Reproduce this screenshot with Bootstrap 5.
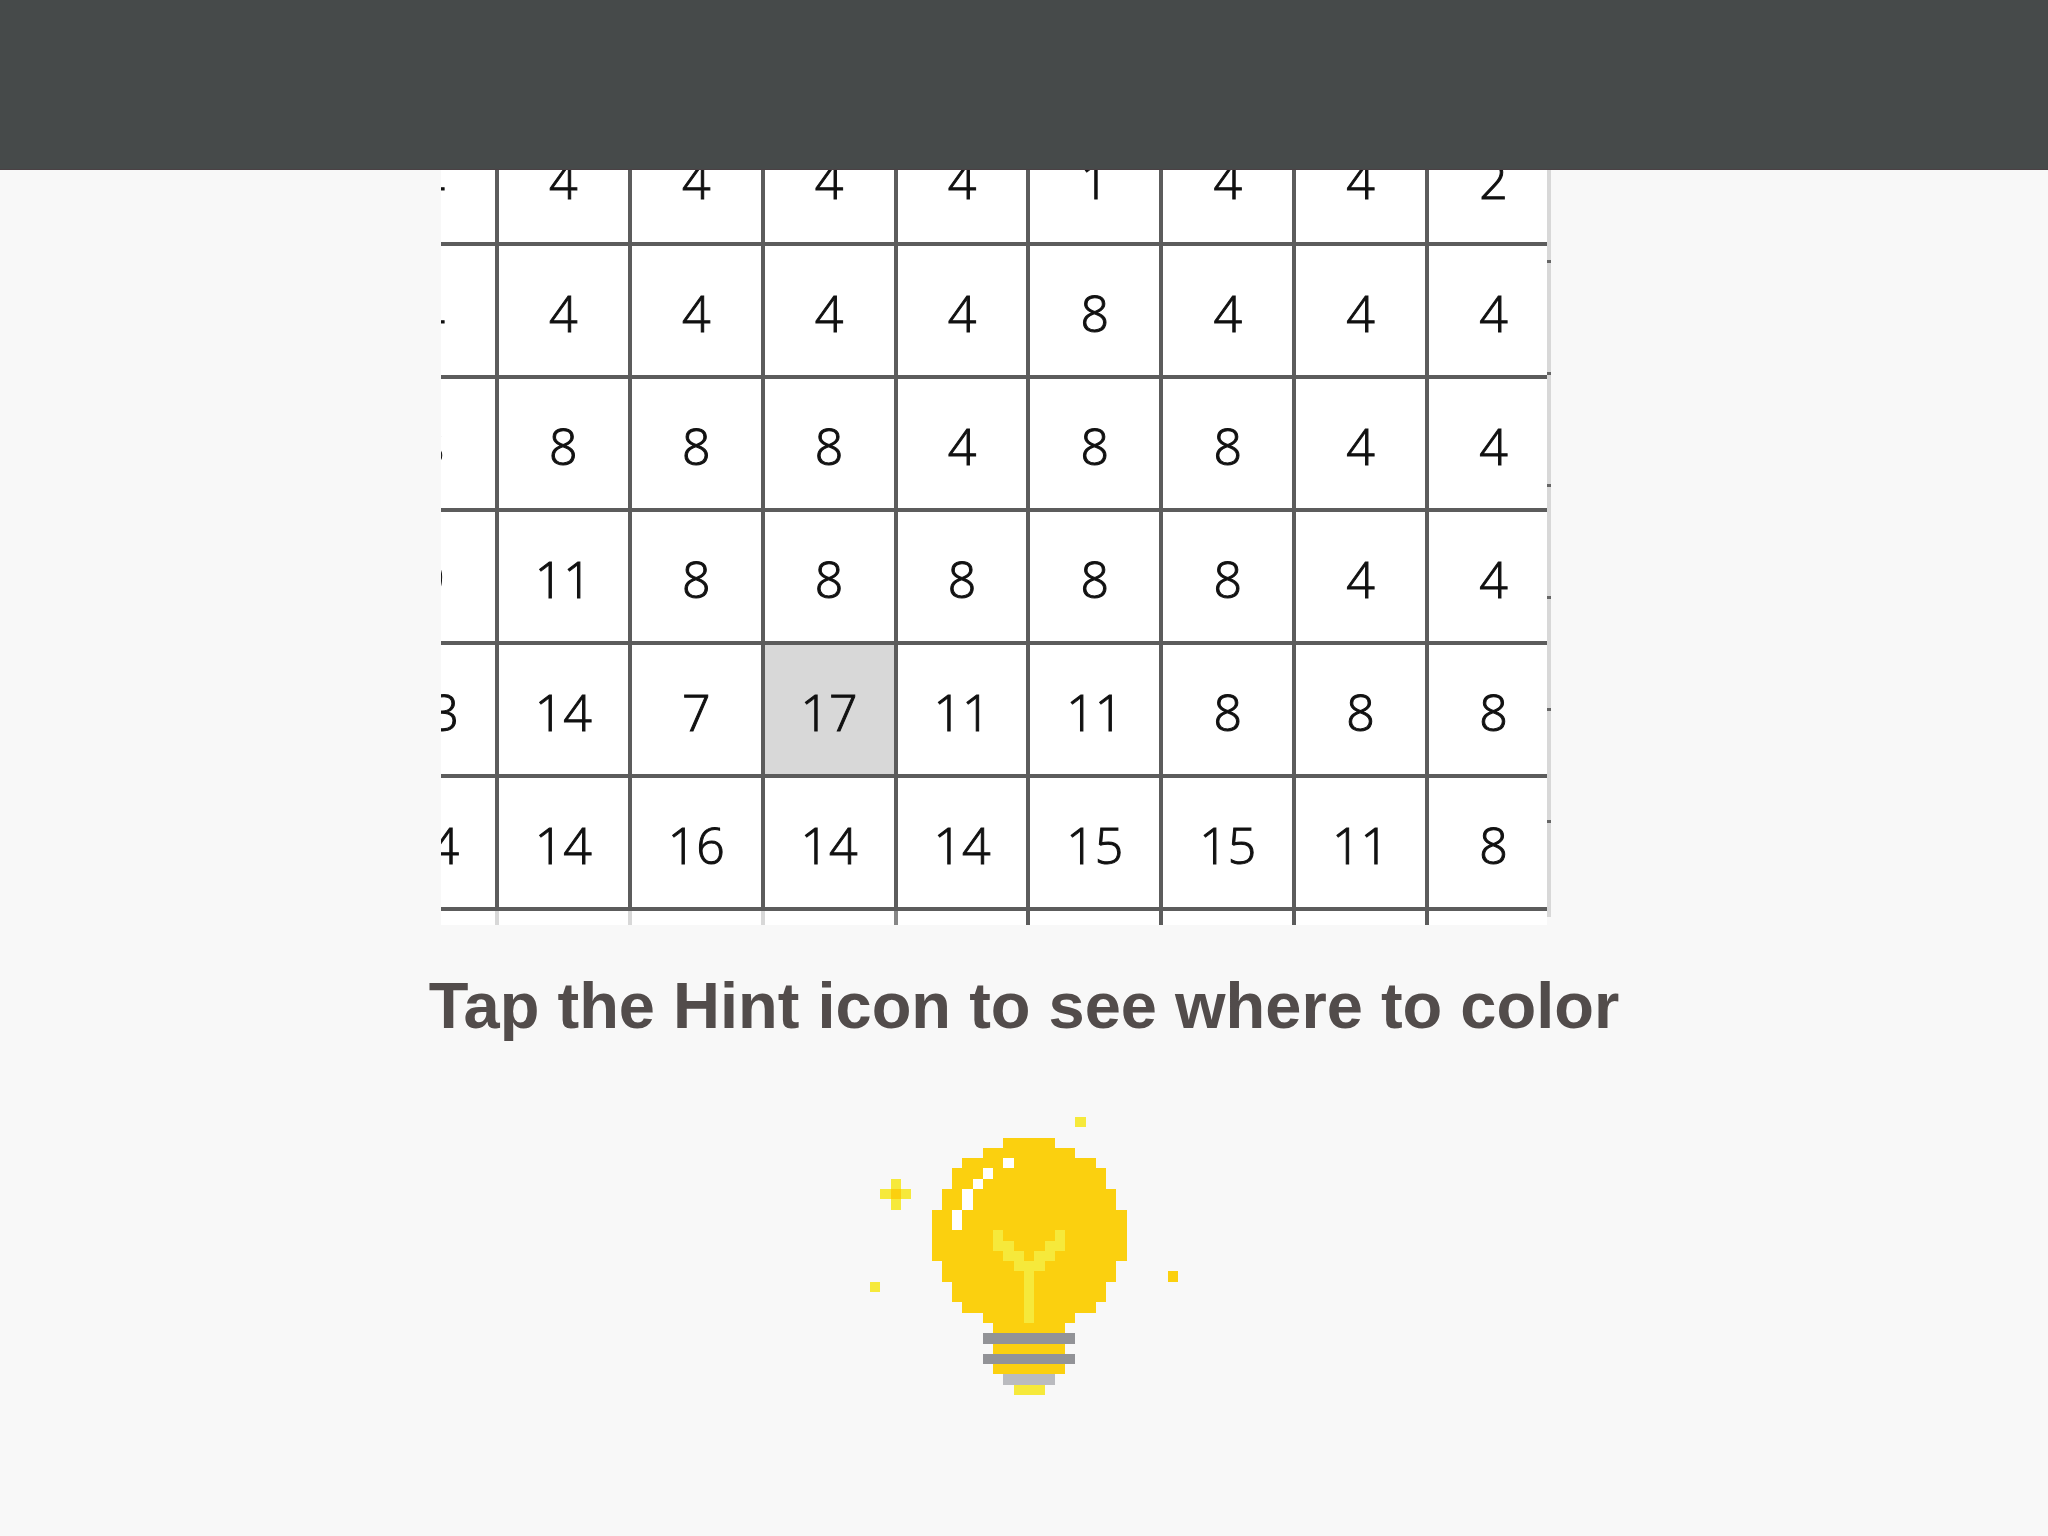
<!DOCTYPE html>
<html lang="en">
<head>
<meta charset="utf-8">
<meta name="viewport" content="width=device-width, initial-scale=1">
<title>Color by number: hint</title>
<link href="https://cdn.jsdelivr.net/npm/bootstrap@5.3.0/dist/css/bootstrap.min.css" rel="stylesheet">
<style>
body { background: #f8f8f8; font-family: "Liberation Sans", Arial, sans-serif; }
.top-bar { height: 170px; background: #464a4a; border-bottom: 1px solid #4a4144; }
.stage { max-width: 1166px; }
.board-view { width: 100%; max-width: 1106px; height: 755px; background: #fff; }
/* the board is larger than its viewport, so it is panned under it */
.board { width: 1200px; table-layout: fixed; border-collapse: collapse; margin: -61px 0 0 -79px; }
.board td { height: 133px; padding: 4px 0 0; border: 4px solid #5c5c5c; text-align: center; vertical-align: middle;
  font: 300 50px/60px "Open Sans", sans-serif; color: #111; -webkit-text-stroke: 1px #111; }
.board .picked { background: #d8d8d8; }
.board .dim { border-color: #868686 #d8d8d8 #d8d8d8; }
.board .dim-end { border-right-color: #868686; }
.board-edge { width: 4px; height: 747px;
  background: linear-gradient(#666 3px, #d8d8d8 3px) 0 -22px / 4px 112px; }
.hint-title { margin: 41px 0 0; font-size: 65px; line-height: 80px; font-weight: 700; color: #524c4b; }
.hint-button { margin-top: 71px; }
.hint-button svg { width: 308px; height: 278px; }
</style>
<script src="https://cdn.jsdelivr.net/npm/bootstrap@5.3.0/dist/js/bootstrap.bundle.min.js"></script>
</head>
<body>
<header class="top-bar"></header>
<main class="d-flex flex-column align-items-center">
  <div class="stage w-100 d-flex align-items-start">
    <div class="board-view overflow-hidden">
      <table class="board">
        <tbody>
          <tr><td>4</td><td>4</td><td>4</td><td>4</td><td>4</td><td>1</td><td>4</td><td>4</td><td>2</td></tr>
          <tr><td>4</td><td>4</td><td>4</td><td>4</td><td>4</td><td>8</td><td>4</td><td>4</td><td>4</td></tr>
          <tr><td>8</td><td>8</td><td>8</td><td>8</td><td>4</td><td>8</td><td>8</td><td>4</td><td>4</td></tr>
          <tr><td>9</td><td>11</td><td>8</td><td>8</td><td>8</td><td>8</td><td>8</td><td>4</td><td>4</td></tr>
          <tr><td>13</td><td>14</td><td>7</td><td class="picked">17</td><td>11</td><td>11</td><td>8</td><td>8</td><td>8</td></tr>
          <tr><td>14</td><td>14</td><td>16</td><td>14</td><td>14</td><td>15</td><td>15</td><td>11</td><td>8</td></tr>
          <tr><td class="dim"></td><td class="dim"></td><td class="dim"></td><td class="dim dim-end"></td><td></td><td></td><td></td><td></td><td></td></tr>
        </tbody>
      </table>
    </div>
    <div class="board-edge flex-shrink-0"></div>
  </div>
  <h1 class="hint-title text-center">Tap the Hint icon to see where to color</h1>
  <button type="button" class="hint-button btn p-0 border-0" aria-label="Hint">
    <svg class="d-block" viewBox="0 0 30 27" preserveAspectRatio="none" shape-rendering="crispEdges" aria-hidden="true">
      <path fill="#fbd00f" d="M13 2h5v1h2v1h2v1h1v2h1v2h1v5h-1v2h-1v2h-1v1h-2v1h-1v5h-7v-5h-1v-1h-2v-1h-1v-2h-1v-2h-1v-5h1v-2h1v-2h1v-1h2v-1h2z"/>
      <path fill="#fff" d="M13 4h1v1h-1zM11 5h1v1h-1zM10 6h1v1h-1zM9 7h1v2h-1zM8 9h1v2h-1z"/>
      <path fill="#f6e93b" d="M12 11h1v1h1v1h1v1h1v-1h1v-1h1v-1h1v2h-1v1h-1v1h-1v5h-1v-5h-1v-1h-1v-1h-1z"/>
      <path fill="#f6e93b" d="M14 26h3v1h-3zM20 0h1v1h-1zM2 6h1v3h-1zM1 7h3v1h-3zM0 16h1v1h-1z"/>
      <path fill="#fbd00f" d="M2 7h1v1h-1zM29 15h1v1h-1z"/>
      <path fill="#929397" d="M11 21h9v1h-9zM11 23h9v1h-9z"/>
      <path fill="#babbbf" d="M13 25h5v1h-5z"/>
    </svg>
  </button>
</main>
</body>
</html>
